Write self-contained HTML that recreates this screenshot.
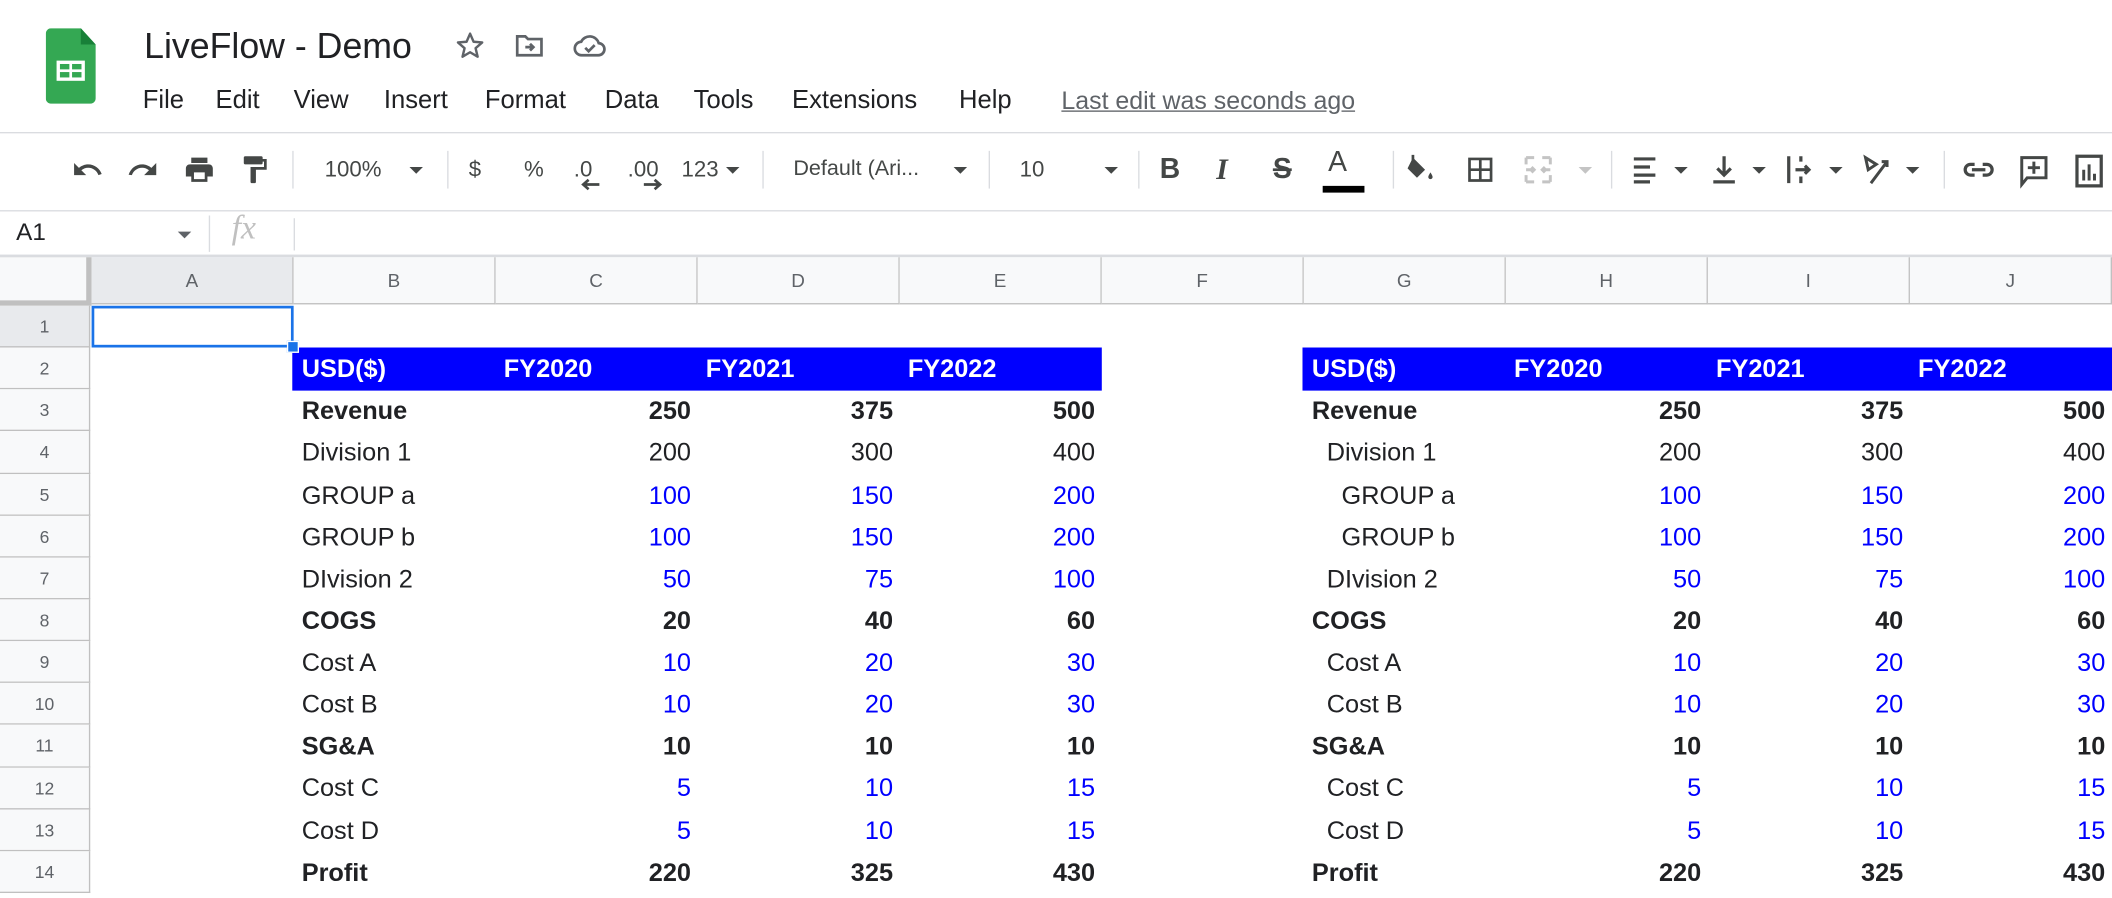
<!DOCTYPE html>
<html><head><meta charset="utf-8">
<style>
html,body{margin:0;padding:0;background:#fff;overflow:hidden;width:2112px;height:898px}
#w{position:absolute;left:0;top:0;width:1568px;height:667px;transform:scale(1.346939);transform-origin:0 0;font-family:"Liberation Sans",Arial,sans-serif;color:#202124}
.a{position:absolute}
.menu span{position:absolute;top:64px;font-size:19px;color:#202124}
.tb{position:absolute;top:98px;left:0;width:1568px;height:57px;border-top:1px solid #dadce0;border-bottom:1px solid #dadce0}
.sep{position:absolute;top:112px;width:1px;height:28px;background:#dadce0}
.ic{position:absolute;top:114px}
.tt{position:absolute;top:117px;font-size:16.5px;color:#444746}
.dd{position:absolute;top:124px;width:0;height:0;border-left:5px solid transparent;border-right:5px solid transparent;border-top:5px solid #444746}
.ch{position:absolute;top:191px;height:35px;background:#f8f9fa;border-bottom:1px solid #c0c0c0;border-right:1px solid #c0c0c0;box-sizing:border-box;text-align:center;line-height:35px;font-size:14px;color:#5f6368}
.rh{position:absolute;left:0;width:67px;height:31.14px;background:#f8f9fa;border-bottom:1px solid #c0c0c0;border-right:1px solid #c0c0c0;box-sizing:border-box;text-align:center;font-size:13px;color:#5f6368;line-height:31px}
table{position:absolute;left:68px;top:227px;border-collapse:collapse;table-layout:fixed}
td{width:150px;height:31.14px;padding:0 5px 0 6px;box-sizing:border-box;font-size:18.8px;white-space:nowrap;overflow:hidden;line-height:31px}
td.n{text-align:right}
.b{font-weight:bold}
.bl{color:#0000ff}
tr.h td.hd{color:#fff;font-weight:bold}
</style></head><body><div id="w">

<svg class="a" style="left:34px;top:21px" width="38" height="56" viewBox="0 0 38 56">
<path d="M4 0H26L37 12V52a4 4 0 0 1-4 4H4a4 4 0 0 1-4-4V4a4 4 0 0 1 4-4z" fill="#34a853"/>
<path d="M26 0V12H37z" fill="#188038"/>
<rect x="8" y="24" width="21" height="15" fill="#fff"/>
<rect x="10.5" y="26.5" width="7" height="4" fill="#34a853"/><rect x="19.5" y="26.5" width="7" height="4" fill="#34a853"/>
<rect x="10.5" y="32.5" width="7" height="4" fill="#34a853"/><rect x="19.5" y="32.5" width="7" height="4" fill="#34a853"/>
</svg>
<div class="a" style="left:107px;top:19px;font-size:26.5px;color:#202124">LiveFlow - Demo</div>
<svg class="a" style="left:337px;top:22px" width="24" height="24" viewBox="0 0 24 24"><path d="M12 3l2.6 6 6.4.5-4.9 4.3 1.5 6.3L12 16.8 6.4 20.1l1.5-6.3L3 9.5l6.4-.5z" fill="none" stroke="#5f6368" stroke-width="1.8" stroke-linejoin="round"/></svg>
<svg class="a" style="left:381px;top:22px" width="24" height="24" viewBox="0 0 24 24"><path d="M3 5h6l2 2h10v12H3z" fill="none" stroke="#5f6368" stroke-width="2"/><path d="M9 13h6M12.5 10.5L15 13l-2.5 2.5" fill="none" stroke="#5f6368" stroke-width="2"/></svg>
<svg class="a" style="left:425px;top:22px" width="26" height="24" viewBox="0 0 26 24"><path d="M7 19h12a4.5 4.5 0 0 0 .5-9A7 7 0 0 0 6.5 9 5 5 0 0 0 7 19z" fill="none" stroke="#5f6368" stroke-width="2"/><path d="M9.5 13.5l2.5 2.5 4.5-4.5" fill="none" stroke="#5f6368" stroke-width="2"/></svg>

<div class="menu">
<span style="left:106px">File</span><span style="left:160px">Edit</span><span style="left:218px">View</span><span style="left:285px">Insert</span><span style="left:360px">Format</span><span style="left:449px">Data</span><span style="left:515px">Tools</span><span style="left:588px">Extensions</span><span style="left:712px">Help</span>
<span style="left:788px;color:#5f6368;text-decoration:underline;font-size:18.5px">Last edit was seconds ago</span>
</div>

<div class="tb"></div>
<svg class="ic" style="left:53px" width="24" height="24" viewBox="0 0 24 24"><path d="M12.5 8c-2.65 0-5.050 1-6.9 2.6L2 7v9h9l-3.6-3.6c1.4-1.2 3.2-1.9 5.1-1.9 3.5 0 6.5 2.3 7.6 5.5l2.4-.8C21 11 17.1 8 12.5 8z" fill="#444746"/></svg>
<svg class="ic" style="left:94px" width="24" height="24" viewBox="0 0 24 24"><path d="M11.5 8c2.65 0 5.05 1 6.9 2.6L22 7v9h-9l3.6-3.6c-1.4-1.2-3.2-1.900-5.1-1.9-3.5 0-6.5 2.3-7.6 5.5L1.5 15.7C3 11 6.9 8 11.5 8z" fill="#444746"/></svg>
<svg class="ic" style="left:136px" width="24" height="24" viewBox="0 0 24 24"><path d="M19 8H5c-1.7 0-3 1.3-3 3v6h4v4h12v-4h4v-6c0-1.7-1.3-3-3-3zm-3 11H8v-5h8v5zM18 3H6v4h12z" fill="#444746"/></svg>
<svg class="ic" style="left:177px" width="24" height="24" viewBox="0 0 24 24"><path d="M18 4V3c0-.6-.4-1-1-1H5c-.6 0-1 .4-1 1v4c0 .6.4 1 1 1h12c.6 0 1-.4 1-1V6h1v4H9v11c0 .6.4 1 1 1h2c.6 0 1-.4 1-1v-9h8V4h-3z" fill="#444746"/></svg>
<div class="sep" style="left:217px"></div>
<div class="tt" style="left:241px">100%</div><div class="dd" style="left:304px"></div>
<div class="sep" style="left:332px"></div>
<div class="tt" style="left:348px">$</div><div class="tt" style="left:389px">%</div>
<div class="tt" style="left:426px">.0</div><svg class="a" style="left:430px;top:132px" width="16" height="10"><path d="M15 5H4M7 1.5L3 5l4 3.5" stroke="#444746" stroke-width="2" fill="none"/></svg>
<div class="tt" style="left:466px">.00</div><svg class="a" style="left:477px;top:132px" width="16" height="10"><path d="M1 5h11M9 1.5L13 5 9 8.5" stroke="#444746" stroke-width="2" fill="none"/></svg>
<div class="tt" style="left:506px">123</div><div class="dd" style="left:539px"></div>
<div class="sep" style="left:566px"></div>
<div class="tt" style="left:589px;font-size:16px">Default (Ari...</div><div class="dd" style="left:708px"></div>
<div class="sep" style="left:734px"></div>
<div class="tt" style="left:757px">10</div><div class="dd" style="left:820px"></div>
<div class="sep" style="left:845px"></div>
<div class="tt" style="left:861px;font-size:21px;font-weight:bold;color:#444746;top:114px">B</div>
<div class="tt" style="left:903px;font-size:22px;font-style:italic;font-family:'Liberation Serif',serif;font-weight:bold;top:113px">I</div>
<div class="tt" style="left:945px;font-size:21px;font-weight:bold;top:114px;text-decoration:line-through">S</div>
<div class="tt" style="left:986px;font-size:21px;top:109px">A</div>
<div class="a" style="left:982px;top:138px;width:31px;height:5px;background:#000"></div>
<div class="sep" style="left:1034px"></div>
<svg class="ic" style="left:1041px" width="26" height="24" viewBox="0 0 26 24"><path d="M8 3l9 9-6 6-7-7z" fill="#444746"/><path d="M8 1v5" stroke="#444746" stroke-width="2"/><path d="M21 14c-1 1.6-1.6 2.6-1.6 3.4a1.6 1.6 0 0 0 3.2 0c0-.8-.6-1.8-1.6-3.4z" fill="#444746"/></svg>
<svg class="ic" style="left:1087px" width="24" height="24" viewBox="0 0 24 24"><path d="M3 3h18v18H3zM5 5v6h6V5zm8 0v6h6V5zM5 13v6h6v-6zm8 0v6h6v-6z" fill="#444746" fill-rule="evenodd"/></svg>
<svg class="ic" style="left:1130px" width="24" height="24" viewBox="0 0 24 24"><path d="M3 3h6M3 3v5M21 3h-6M21 3v5M3 21h6M3 21v-5M21 21h-6M21 21v-5M3 12h6M21 12h-6M7 10l2 2-2 2M17 10l-2 2 2 2" stroke="#c4c4c4" stroke-width="2.2" fill="none"/></svg>
<div class="dd" style="left:1172px;border-top-color:#c4c4c4"></div>
<div class="sep" style="left:1196px"></div>
<svg class="ic" style="left:1210px" width="24" height="24" viewBox="0 0 24 24"><path d="M3 4h16M3 10h12M3 16h16M3 21h12" stroke="#444746" stroke-width="2.4"/></svg><div class="dd" style="left:1243px"></div>
<svg class="ic" style="left:1268px" width="24" height="24" viewBox="0 0 24 24"><path d="M12 2v13M7 11l5 5 5-5M4 21h16" stroke="#444746" stroke-width="2.4" fill="none"/></svg><div class="dd" style="left:1301px"></div>
<svg class="ic" style="left:1325px" width="24" height="24" viewBox="0 0 24 24"><path d="M3 2v20M12 2v4M12 17v5M8 12h10M15 9l3 3-3 3" stroke="#444746" stroke-width="2.4" fill="none"/></svg><div class="dd" style="left:1358px"></div>
<svg class="ic" style="left:1381px" width="24" height="24" viewBox="0 0 24 24"><path d="M4 3l8 5-6 4zM8 22L20 6M16 6h4v4" stroke="#444746" stroke-width="2.2" fill="none"/></svg><div class="dd" style="left:1415px"></div>
<div class="sep" style="left:1443px"></div>
<svg class="ic" style="left:1456px" width="26" height="24" viewBox="0 0 26 24"><path d="M10 8H7a4 4 0 0 0 0 8h3M16 8h3a4 4 0 0 1 0 8h-3M8 12h10" stroke="#444746" stroke-width="2.4" fill="none"/></svg>
<svg class="ic" style="left:1498px" width="24" height="26" viewBox="0 0 24 26"><path d="M3 3h18v15H7l-4 5z" stroke="#444746" stroke-width="2.2" fill="none"/><path d="M12 6v9M7.5 10.5h9" stroke="#444746" stroke-width="2.2"/></svg>
<svg class="ic" style="left:1539px" width="24" height="26" viewBox="0 0 24 26"><path d="M3 2h18v22H3z" stroke="#444746" stroke-width="2.4" fill="none"/><path d="M8 12v8M12 8v12M16 15v5" stroke="#444746" stroke-width="2.2"/></svg>

<div class="a" style="left:12px;top:162px;font-size:18px;color:#202124">A1</div>
<div class="dd" style="left:132px;top:172px;border-top-color:#5f6368"></div>
<div class="a" style="left:155px;top:160px;width:1px;height:27px;background:#dadce0"></div>
<div class="a" style="left:172px;top:156px;font-size:25px;font-style:italic;font-family:'Liberation Serif',serif;color:#c0c0c0">fx</div>
<div class="a" style="left:218px;top:162px;width:1px;height:24px;background:#dadce0"></div>
<div class="a" style="left:0;top:189px;width:1568px;height:2px;background:#dadce0"></div>

<div class="a" style="left:0;top:191px;width:68px;height:36px;background:#c0c0c0"></div>
<div class="a" style="left:0;top:191px;width:64px;height:32px;background:#f8f9fa"></div>
<div class="ch" style="left:68px;width:150px;background:#e8eaed">A</div>
<div class="ch" style="left:218px;width:150px">B</div>
<div class="ch" style="left:368px;width:150px">C</div>
<div class="ch" style="left:518px;width:150px">D</div>
<div class="ch" style="left:668px;width:150px">E</div>
<div class="ch" style="left:818px;width:150px">F</div>
<div class="ch" style="left:968px;width:150px">G</div>
<div class="ch" style="left:1118px;width:150px">H</div>
<div class="ch" style="left:1268px;width:150px">I</div>
<div class="ch" style="left:1418px;width:150px">J</div>

<div class="rh" style="top:227px;background:#e8eaed">1</div>
<div class="rh" style="top:258.14px">2</div>
<div class="rh" style="top:289.28px">3</div>
<div class="rh" style="top:320.42px">4</div>
<div class="rh" style="top:351.56px">5</div>
<div class="rh" style="top:382.7px">6</div>
<div class="rh" style="top:413.84px">7</div>
<div class="rh" style="top:444.98px">8</div>
<div class="rh" style="top:476.12px">9</div>
<div class="rh" style="top:507.26px">10</div>
<div class="rh" style="top:538.4px">11</div>
<div class="rh" style="top:569.54px">12</div>
<div class="rh" style="top:600.68px">13</div>
<div class="rh" style="top:631.82px">14</div>

<div class="a" style="left:217px;top:258px;width:601px;height:31.5px;background:#0000ff"></div>
<div class="a" style="left:967px;top:258px;width:601px;height:31.5px;background:#0000ff"></div>

<table>
<tr><td></td><td></td><td></td><td></td><td></td><td></td><td></td><td></td><td></td><td></td></tr>
<tr class="h"><td></td><td class="hd">USD($)</td><td class="hd">FY2020</td><td class="hd">FY2021</td><td class="hd">FY2022</td><td></td><td class="hd">USD($)</td><td class="hd">FY2020</td><td class="hd">FY2021</td><td class="hd">FY2022</td></tr>
<tr class="b"><td></td><td>Revenue</td><td class="n">250</td><td class="n">375</td><td class="n">500</td><td></td><td>Revenue</td><td class="n">250</td><td class="n">375</td><td class="n">500</td></tr>
<tr><td></td><td>Division 1</td><td class="n">200</td><td class="n">300</td><td class="n">400</td><td></td><td style="padding-left:17px">Division 1</td><td class="n">200</td><td class="n">300</td><td class="n">400</td></tr>
<tr><td></td><td>GROUP a</td><td class="n bl">100</td><td class="n bl">150</td><td class="n bl">200</td><td></td><td style="padding-left:28px">GROUP a</td><td class="n bl">100</td><td class="n bl">150</td><td class="n bl">200</td></tr>
<tr><td></td><td>GROUP b</td><td class="n bl">100</td><td class="n bl">150</td><td class="n bl">200</td><td></td><td style="padding-left:28px">GROUP b</td><td class="n bl">100</td><td class="n bl">150</td><td class="n bl">200</td></tr>
<tr><td></td><td>DIvision 2</td><td class="n bl">50</td><td class="n bl">75</td><td class="n bl">100</td><td></td><td style="padding-left:17px">DIvision 2</td><td class="n bl">50</td><td class="n bl">75</td><td class="n bl">100</td></tr>
<tr class="b"><td></td><td>COGS</td><td class="n">20</td><td class="n">40</td><td class="n">60</td><td></td><td>COGS</td><td class="n">20</td><td class="n">40</td><td class="n">60</td></tr>
<tr><td></td><td>Cost A</td><td class="n bl">10</td><td class="n bl">20</td><td class="n bl">30</td><td></td><td style="padding-left:17px">Cost A</td><td class="n bl">10</td><td class="n bl">20</td><td class="n bl">30</td></tr>
<tr><td></td><td>Cost B</td><td class="n bl">10</td><td class="n bl">20</td><td class="n bl">30</td><td></td><td style="padding-left:17px">Cost B</td><td class="n bl">10</td><td class="n bl">20</td><td class="n bl">30</td></tr>
<tr class="b"><td></td><td>SG&amp;A</td><td class="n">10</td><td class="n">10</td><td class="n">10</td><td></td><td>SG&amp;A</td><td class="n">10</td><td class="n">10</td><td class="n">10</td></tr>
<tr><td></td><td>Cost C</td><td class="n bl">5</td><td class="n bl">10</td><td class="n bl">15</td><td></td><td style="padding-left:17px">Cost C</td><td class="n bl">5</td><td class="n bl">10</td><td class="n bl">15</td></tr>
<tr><td></td><td>Cost D</td><td class="n bl">5</td><td class="n bl">10</td><td class="n bl">15</td><td></td><td style="padding-left:17px">Cost D</td><td class="n bl">5</td><td class="n bl">10</td><td class="n bl">15</td></tr>
<tr class="b"><td></td><td>Profit</td><td class="n">220</td><td class="n">325</td><td class="n">430</td><td></td><td>Profit</td><td class="n">220</td><td class="n">325</td><td class="n">430</td></tr>
</table>

<div class="a" style="left:68px;top:227px;width:150px;height:31px;box-sizing:border-box;border:2px solid #1a73e8"></div>
<div class="a" style="left:213px;top:253px;width:7px;height:7px;background:#1a73e8;border:1px solid #fff"></div>
</div></body></html>
